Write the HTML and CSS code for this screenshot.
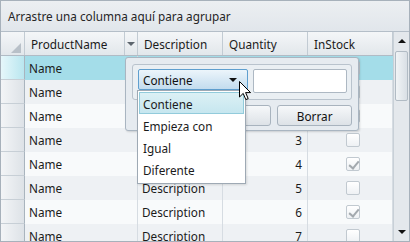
FILE: index.html
```html
<!DOCTYPE html>
<html lang="es">
<head>
    <meta charset="UTF-8">
    <title>Grid</title>
    <link rel="stylesheet" href="styles.css">
</head>
<body>
    <div class="grid">
        <div class="group-panel">Arrastre una columna aquí para agrupar</div>
        <div class="grid-body">
            <div class="table">
                <div class="row header">
                    <div class="cell indicator corner"><span class="corner-mark"></span></div>
                    <div class="cell head-name">
                        <span class="head-text">ProductName</span>
                        <span class="filter-btn"><span class="tri-down"></span></span>
                    </div>
                    <div class="cell">Description</div>
                    <div class="cell">Quantity</div>
                    <div class="cell">InStock</div>
                </div>

                <div class="row selected">
                    <div class="cell indicator"></div>
                    <div class="cell">Name</div>
                    <div class="cell">Description</div>
                    <div class="cell num">0</div>
                    <div class="cell check"><span class="box"></span></div>
                </div>
                <div class="row odd">
                    <div class="cell indicator"></div>
                    <div class="cell">Name</div>
                    <div class="cell">Description</div>
                    <div class="cell num">1</div>
                    <div class="cell check"><span class="box"></span></div>
                </div>
                <div class="row even">
                    <div class="cell indicator"></div>
                    <div class="cell">Name</div>
                    <div class="cell">Description</div>
                    <div class="cell num">2</div>
                    <div class="cell check"><span class="box checked"></span></div>
                </div>
                <div class="row odd">
                    <div class="cell indicator"></div>
                    <div class="cell">Name</div>
                    <div class="cell">Description</div>
                    <div class="cell num">3</div>
                    <div class="cell check"><span class="box"></span></div>
                </div>
                <div class="row even">
                    <div class="cell indicator"></div>
                    <div class="cell">Name</div>
                    <div class="cell">Description</div>
                    <div class="cell num">4</div>
                    <div class="cell check"><span class="box checked"></span></div>
                </div>
                <div class="row odd">
                    <div class="cell indicator"></div>
                    <div class="cell">Name</div>
                    <div class="cell">Description</div>
                    <div class="cell num">5</div>
                    <div class="cell check"><span class="box"></span></div>
                </div>
                <div class="row even">
                    <div class="cell indicator"></div>
                    <div class="cell">Name</div>
                    <div class="cell">Description</div>
                    <div class="cell num">6</div>
                    <div class="cell check"><span class="box checked"></span></div>
                </div>
                <div class="row odd">
                    <div class="cell indicator"></div>
                    <div class="cell">Name</div>
                    <div class="cell">Description</div>
                    <div class="cell num">7</div>
                    <div class="cell check"><span class="box"></span></div>
                </div>
            </div>

            <div class="scrollbar">
                <div class="scroll-btn"><span class="tri-up"></span></div>
                <div class="scroll-track">
                    <div class="scroll-thumb"></div>
                </div>
                <div class="scroll-btn"><span class="tri-down dark"></span></div>
            </div>
        </div>

        <!-- filter popup over the grid -->
        <div class="filter-popup">
            <div class="filter-box">
                <div class="combo">
                    <span>Contiene</span>
                    <span class="tri-down dark"></span>
                </div>
                <div class="text-input"></div>
            </div>
            <div class="filter-actions">
                <div class="btn btn-wide">Filtrar</div>
                <div class="btn">Borrar</div>
            </div>
        </div>

        <ul class="combo-list">
            <li class="active">Contiene</li>
            <li>Empieza con</li>
            <li>Igual</li>
            <li>Diferente</li>
        </ul>

        <svg class="cursor" width="13" height="20" viewBox="0 0 13 20">
            <path d="M0.5 0.5 L0.5 16 L4.2 12.4 L6.8 18.6 L9.2 17.6 L6.6 11.6 L11.6 11.6 Z" fill="#fff" stroke="#000" stroke-width="1" stroke-linejoin="miter"/>
        </svg>
    </div>
</body>
</html>
```

FILE: styles.css
```css
* {
    margin: 0;
    padding: 0;
    box-sizing: border-box;
}

body {
    font-family: 'Noto Sans', 'Open Sans', sans-serif;
    font-size: 11.75px;
    color: #1b1b1b;
    background: #fff;
}

.grid {
    position: relative;
    width: 410px;
    height: 242px;
    border: 1px solid #a7b1bb;
    overflow: hidden;
    background: #f7f9fa;
}

.group-panel {
    height: 31px;
    padding-left: 7px;
    line-height: 30px;
    color: #262626;
    background: linear-gradient(#eceff2, #e1e6eb);
    border-bottom: 1px solid #b4bec8;
}

.grid-body {
    display: flex;
    height: 209px;
}

.table {
    width: 392px;
    overflow: hidden;
}

.row {
    display: grid;
    grid-template-columns: 24px 113px 85px 85px 85px;
    height: 24px;
}

.cell {
    display: flex;
    align-items: center;
    padding: 0 4px;
    border-right: 1px solid #d6dce2;
    white-space: nowrap;
    overflow: hidden;
}

.row.odd {
    background: #eef1f4;
}

.row.even {
    background: #f8fafb;
}

.row.selected {
    background: #a4dde9;
}

.row.selected .cell {
    border-right-color: #a4dde9;
}

.row.selected .cell:nth-child(2) {
    border-right-color: #d6dce2;
}

.indicator {
    background: linear-gradient(90deg, #f3f5f7, #dde2e7);
    border-right: 1px solid #a9b4be;
    border-bottom: 1px solid #c7cfd6;
}

.row.selected .indicator {
    background: linear-gradient(90deg, #e6f7fb, #b9e6ef);
    border-right: 1px solid #a9b4be;
}

.header {
    background: linear-gradient(#f4f6f8, #e2e7eb);
    border-bottom: 1px solid #b1bbc5;
}

.header .cell {
    padding-left: 6px;
    border-right: 1px solid #c2cbd3;
}

.header .indicator {
    position: relative;
    border-right: 1px solid #c2cbd3;
    border-bottom: none;
    background: linear-gradient(#f4f6f8, #e2e7eb);
}

.corner-mark {
    position: absolute;
    right: 3px;
    bottom: 2px;
    width: 0;
    height: 0;
    border-left: 10px solid transparent;
    border-bottom: 10px solid #b8c0c8;
}

.head-name {
    padding-right: 0;
    justify-content: space-between;
}

.header .head-name {
    padding-right: 0;
}

.filter-btn {
    display: flex;
    align-items: center;
    justify-content: center;
    width: 13px;
    height: 23px;
    border-left: 1px solid #c2cbd3;
}

.tri-down {
    width: 0;
    height: 0;
    border-left: 4px solid transparent;
    border-right: 4px solid transparent;
    border-top: 4px solid #5d656d;
}

.tri-down.dark {
    border-top-color: #111;
}

.tri-up {
    width: 0;
    height: 0;
    border-left: 4px solid transparent;
    border-right: 4px solid transparent;
    border-bottom: 4px solid #111;
}

.num {
    justify-content: flex-end;
    padding-right: 5px;
}

.check {
    justify-content: center;
    padding: 0 0 0 6px;
}

.box {
    position: relative;
    width: 14px;
    height: 14px;
    border: 1px solid #c1c9d0;
    border-radius: 2px;
    background: linear-gradient(#ffffff, #eef1f4);
}

.box.checked::after {
    content: "";
    position: absolute;
    left: 4px;
    top: 1px;
    width: 4px;
    height: 8px;
    border-right: 2px solid #a3a9ae;
    border-bottom: 2px solid #a3a9ae;
    transform: rotate(40deg);
}

.scrollbar {
    display: flex;
    flex-direction: column;
    width: 16px;
    background: #e4e8ec;
    border-left: 1px solid #c8d0d7;
}

.scroll-btn {
    display: flex;
    align-items: center;
    justify-content: center;
    height: 18px;
}

.scroll-track {
    flex: 1;
    padding: 1px 1px 0 1px;
}

.scroll-thumb {
    height: 50px;
    border: 1px solid #b1bbc4;
    border-radius: 2px;
    background: linear-gradient(90deg, #f1f4f6, #d9dfe5);
}

.filter-popup {
    position: absolute;
    left: 124px;
    top: 56px;
    width: 234px;
    height: 74px;
    padding: 6px;
    border: 1px solid #a9b5c1;
    border-radius: 3px;
    background: #e6ebf0;
    box-shadow: 1px 1px 2px rgba(0, 0, 0, 0.15);
}

.filter-box {
    display: flex;
    gap: 5px;
    height: 36px;
    padding: 4px 4px 0 5px;
    border: 1px solid #b9c3cd;
    border-radius: 3px;
    background: #eaeff3;
}

.combo {
    display: flex;
    align-items: center;
    justify-content: space-between;
    width: 111px;
    height: 21px;
    padding: 0 10px 0 4px;
    border: 1px solid #5f9fcf;
    border-radius: 2px;
    background: linear-gradient(#ecf5fb, #c3dcee);
    color: #111;
}

.text-input {
    width: 95px;
    height: 24px;
    border: 1px solid #adb8c3;
    border-radius: 2px;
    background: #fff;
}

.filter-actions {
    display: flex;
    gap: 6px;
    margin-top: 5px;
    padding-left: 6px;
}

.btn {
    display: flex;
    align-items: center;
    justify-content: center;
    width: 75px;
    height: 21px;
    border: 1px solid #a8b3be;
    border-radius: 3px;
    background: linear-gradient(#f6f8fa, #dde2e7);
    color: #111;
}

.btn-wide {
    width: 134px;
}

.combo-list {
    position: absolute;
    left: 136px;
    top: 89px;
    width: 109px;
    height: 94px;
    list-style: none;
    padding: 1px;
    background: #fff;
    border: 1px solid #9ea9b4;
    box-shadow: 1px 1px 2px rgba(0, 0, 0, 0.12);
}

.combo-list li {
    height: 22px;
    line-height: 22px;
    padding-left: 3px;
    border: 1px solid transparent;
}

.combo-list li.active {
    background: linear-gradient(#dcf0f5, #c6e6ef);
    border-color: #92cbdb;
}

.cursor {
    position: absolute;
    left: 238px;
    top: 80px;
}
```
